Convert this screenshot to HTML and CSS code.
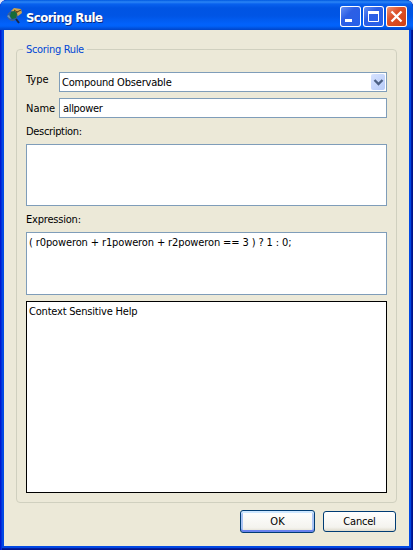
FILE: index.html
```html
<!DOCTYPE html>
<html lang="en">
<head>
<meta charset="utf-8">
<title>Scoring Rule</title>
<link rel="stylesheet" href="styles.css">
</head>
<body>
<div class="window">
  <header class="titlebar">
    <svg class="app-icon" width="16" height="17" viewBox="0 0 16 17">
      <path d="M4 3l3-3 7 1 1 4-4 3-5-1z" fill="#d0a54c"/>
      <path d="M7 2l3 2 4-2M10 4l-1 3" fill="none" stroke="#4c371c"/>
      <circle cx="5.5" cy="8" r="4.6" fill="#285da5" stroke="#48618a"/>
      <path d="M4 4l4-1 2 3-1 4-4 1-2-3z" fill="#176b37"/>
      <path d="M0 8l2-1 2 4-2-1z" fill="#6d98bb"/>
      <path d="M9 11l3 4" stroke="#182646" stroke-width="2"/>
    </svg>
    <h1 class="title">Scoring Rule</h1>
    <div class="controls">
      <svg class="control" width="21" height="21" viewBox="0 0 21 21"><path d="M5 14.5h7" stroke="#fff" stroke-width="3"/></svg>
      <svg class="control" width="21" height="21" viewBox="0 0 21 21"><path d="M5.5 5.5h10v10h-10z" fill="none" stroke="#fff"/><path d="M5 6.5h11" stroke="#fff" stroke-width="3"/></svg>
      <svg class="control close" width="21" height="21" viewBox="0 0 21 21"><path d="M5.5 5.5l10 10M15.5 5.5l-10 10" stroke="#fff" stroke-width="2.3"/></svg>
    </div>
  </header>
  <main class="client">
    <section class="group">
      <h2 class="legend"><span class="tighter">Scoring Rule</span></h2>
      <div class="row type-row">
        <label class="label">Type</label>
        <div class="field combo">
          <span class="tight">Compound Observable</span>
          <svg class="drop" width="14" height="16" viewBox="0 0 14 16"><path d="M3.5 6l4 4 4-4" fill="none" stroke="#4d6185" stroke-width="2.4"/></svg>
        </div>
      </div>
      <div class="row">
        <label class="label">Name</label>
        <div class="field"><span class="tighter">allpower</span></div>
      </div>
      <label class="block-label tighter">Description:</label>
      <div class="area description"></div>
      <label class="block-label tight">Expression:</label>
      <div class="area expression"><span class="code">( r0poweron + r1poweron + r2poweron == 3 ) ? 1 : 0;</span></div>
      <div class="area help"><span class="tight">Context Sensitive Help</span></div>
    </section>
    <footer class="actions">
      <button class="button default">OK</button>
      <button class="button cancel tight">Cancel</button>
    </footer>
  </main>
</div>
</body>
</html>
```
FILE: styles.css
```css
* { box-sizing: border-box; }
body {
  margin: 0;
  background: #dfe5f8;
  font: 11px/14px "DejaVu Sans Condensed", "DejaVu Sans", sans-serif;
  color: #000;
}
.tight { letter-spacing: -0.2px; }
.tighter { letter-spacing: -0.33px; }
.code { letter-spacing: -0.12px; }
.window {
  width: 413px;
  height: 550px;
  padding: 0 4px 4px;
  border-radius: 7px 7px 0 0;
  background: #0148e4;
  box-shadow: inset 1px 0 #0019cf, inset 2px 0 #0031dc, inset -1px 0 #00138c, inset -2px 0 #001ea0, inset 0 -1px #00138c, inset 0 -2px #001ea0;
  overflow: hidden;
}
.titlebar {
  display: flex;
  height: 30px;
  margin: 0 -4px;
  padding: 6px 6px 0 7px;
  background: linear-gradient(#0058e0 0, #2b85f5 2px, #0861ee 4px, #0054e3 8px, #0055e5 16px, #0262fb 24px, #0162fa 26px, #0044c8 30px);
}
.app-icon { margin-top: 2px; }
.title {
  margin: 3px auto 0 3px;
  font: bold 13px/17px "DejaVu Sans Condensed", sans-serif;
  letter-spacing: -0.58px;
  white-space: nowrap;
  color: #fff;
  text-shadow: 1px 1px #0a2a80;
}
.controls { display: flex; gap: 2px; }
.control {
  border-radius: 3px;
  background: linear-gradient(135deg, #6d96f5, #2d5fe5 40%, #2560ea);
  box-shadow: inset 0 0 0 1px #fff;
}
.close { background: linear-gradient(135deg, #f09a7c, #dc512b 40%, #cf3f12); }
.client { height: 516px; padding: 19px 12px 0; background: #ece9d8; }
.group {
  height: 454px;
  padding: 0 9px;
  border: 1px solid #d0d0bf;
  border-radius: 4px;
}
.legend { height: 22px; margin: 0; font: inherit; color: #0046d5; }
.legend span {
  position: relative;
  top: -7px;
  left: -3px;
  padding: 0 3px;
  background: #ece9d8;
}
.row { display: flex; height: 20px; margin-bottom: 6px; }
.label { width: 33px; padding-top: 4px; white-space: nowrap; }
.type-row .label { padding-top: 1px; }
.field {
  flex: 1;
  padding: 3px 3px 0;
  border: 1px solid #7f9db9;
  background: #fff;
}
.combo { display: flex; justify-content: space-between; padding: 1px 1px 0 2px; }
.combo span { padding-top: 2px; }
.drop { border-radius: 2px; background: linear-gradient(135deg, #d6e2ff, #b7cbf8); }
.block-label { display: block; height: 20px; padding-top: 1px; }
.area { padding: 3px 2px 2px; border: 1px solid #7f9db9; background: #fff; white-space: nowrap; }
.description { height: 62px; margin-bottom: 6px; }
.expression { height: 63px; margin-bottom: 6px; }
.help { height: 192px; border-color: #000; }
.actions { display: flex; align-items: center; justify-content: flex-end; gap: 8px; height: 23px; margin: 7px 1px 0 0; }
.button {
  height: 21px;
  padding: 1px 0 0;
  border: 1px solid #003c74;
  border-radius: 3px;
  background: linear-gradient(#fff, #f4f3ee 80%, #dedacb);
  font: inherit;
}
.cancel { width: 73px; letter-spacing: -0.2px; }
.default { width: 75px; height: 23px; box-shadow: inset 0 2px #cee7ff, inset 0 -2px #6982ee, inset 2px 0 #a9c3f4, inset -2px 0 #a9c3f4; }
```
